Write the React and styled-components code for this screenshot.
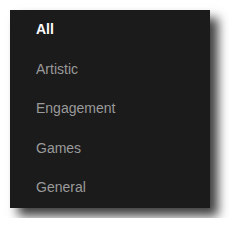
import React from 'react';
import styled, { createGlobalStyle } from 'styled-components';

const GlobalStyle = createGlobalStyle`
  html, body {
    margin: 0;
    padding: 0;
    background: #fff;
  }
`;

const Page = styled.div`
  padding: 10px;
`;

const Menu = styled.ul`
  list-style: none;
  margin: 0;
  padding: 0;
  width: 200px;
  height: 198px;
  background: #1b1b1b;
  box-shadow: 8px 8px 10px rgba(0, 0, 0, 0.75);
  font-family: "Liberation Sans", Arial, sans-serif;
  font-size: 14px;
`;

const Item = styled.li`
  height: 39.5px;
  line-height: 39.5px;
  padding-left: 26px;
  color: ${p => (p.$active ? '#fff' : '#9a9a9a')};
  font-weight: ${p => (p.$active ? 'bold' : 'normal')};
`;

const categories = ['All', 'Artistic', 'Engagement', 'Games', 'General'];

export default function App() {
  return (
    <Page>
      <GlobalStyle />
      <Menu>
        {categories.map((c, i) => (
          <Item key={c} $active={i === 0}>{c}</Item>
        ))}
      </Menu>
    </Page>
  );
}
